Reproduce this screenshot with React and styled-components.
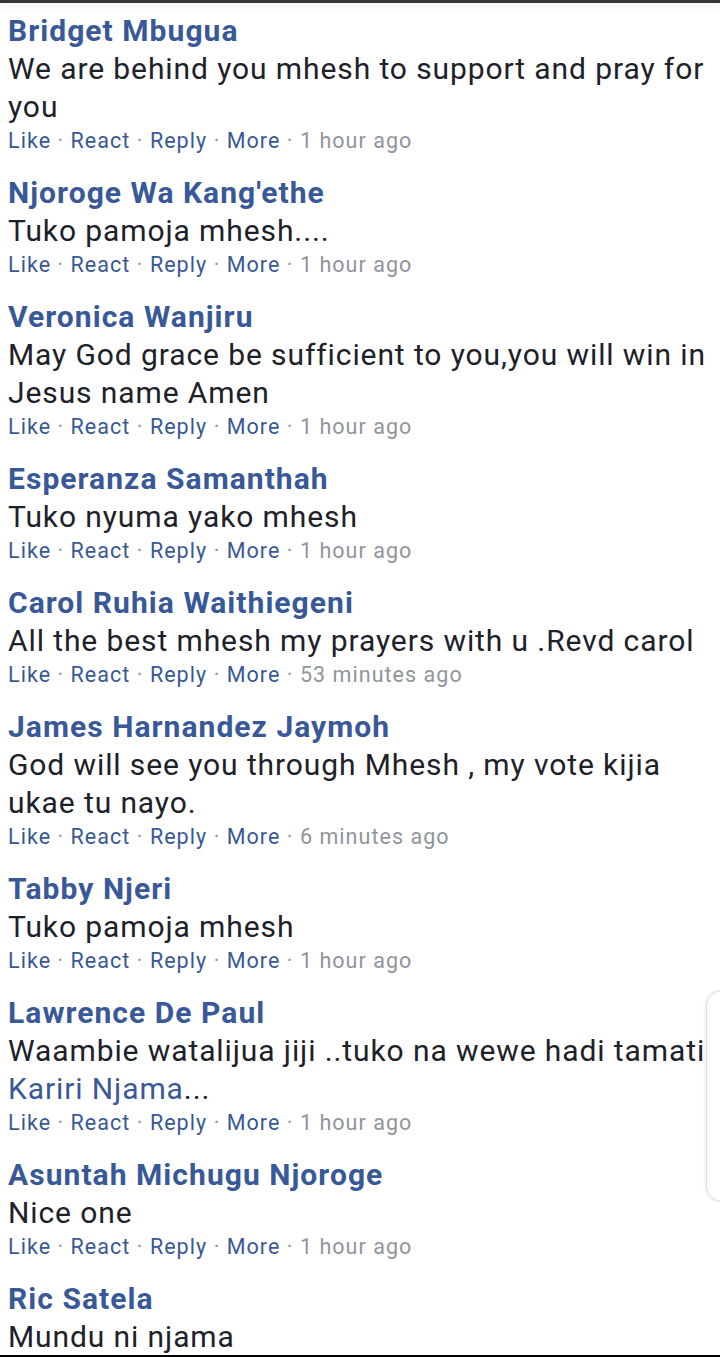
import React from 'react';
import styled, { createGlobalStyle } from 'styled-components';

const GlobalStyle = createGlobalStyle`
  html, body {
    margin: 0;
    padding: 0;
    background: #fff;
  }
  body {
    font-family: Roboto, "Noto Sans", "Liberation Sans", sans-serif;
    -webkit-font-smoothing: antialiased;
  }
`;

const Screen = styled.div`
  position: relative;
  display: flex;
  flex-direction: column;
  width: 720px;
  height: 1357px;
  overflow: hidden;
  background: #fff;
`;

const TopBar = styled.div`
  flex: 0 0 3px;
  background: #333538;
  box-shadow: 0 2px 9px rgba(0, 0, 0, 0.13);
  z-index: 1;
`;

const List = styled.div`
  flex: 1 1 auto;
  overflow: hidden;
  padding: 9px 3px 0 8px;
`;

const Comment = styled.div`
  margin-bottom: 18px;
`;

const Name = styled.div`
  font-size: 30px;
  line-height: 38px;
  font-weight: 700;
  letter-spacing: 1.05px;
  color: #385898;
`;

const Body = styled.div`
  font-size: 30px;
  line-height: 38px;
  letter-spacing: 0.9px;
  color: #1d2129;
`;

const Mention = styled.span`
  color: #385898;
`;

const Actions = styled.div`
  font-size: 21.5px;
  line-height: 30px;
  letter-spacing: 1.05px;
  color: #90949c;
  white-space: nowrap;
`;

const Action = styled.span`
  color: #385898;
`;

const BottomBar = styled.div`
  flex: 0 0 2px;
  background: #000;
`;

const SideCard = styled.div`
  position: absolute;
  left: 706px;
  top: 990px;
  width: 40px;
  height: 210px;
  border-radius: 16px;
  background: #fff;
  border: 1px solid #dcdde0;
  box-shadow: -1px 0 3px rgba(0, 0, 0, 0.08);
`;

const comments = [
  { name: 'Bridget Mbugua', text: 'We are behind you mhesh to support and pray for you', time: '1 hour ago' },
  { name: "Njoroge Wa Kang'ethe", text: 'Tuko pamoja mhesh....', time: '1 hour ago' },
  { name: 'Veronica Wanjiru', text: 'May God grace be sufficient to you,you will win in Jesus name Amen', time: '1 hour ago' },
  { name: 'Esperanza Samanthah', text: 'Tuko nyuma yako mhesh', time: '1 hour ago' },
  { name: 'Carol Ruhia Waithiegeni', text: 'All the best mhesh my prayers with u .Revd carol', time: '53 minutes ago' },
  { name: 'James Harnandez Jaymoh', text: 'God will see you through Mhesh , my vote kijia ukae tu nayo.', time: '6 minutes ago' },
  { name: 'Tabby Njeri', text: 'Tuko pamoja mhesh', time: '1 hour ago' },
  { name: 'Lawrence De Paul', text: 'Waambie watalijua jiji ..tuko na wewe hadi tamati', mention: 'Kariri Njama', time: '1 hour ago' },
  { name: 'Asuntah Michugu Njoroge', text: 'Nice one', time: '1 hour ago' },
  { name: 'Ric Satela', text: 'Mundu ni njama', time: '1 hour ago' }
];

function CommentItem({ comment }) {
  return (
    <Comment>
      <Name>{comment.name}</Name>
      <Body>
        {comment.text}
        {comment.mention && (
          <>
            {' '}
            <Mention>{comment.mention}</Mention>...
          </>
        )}
      </Body>
      <Actions>
        <Action>Like</Action> · <Action>React</Action> · <Action>Reply</Action> ·{' '}
        <Action>More</Action> · {comment.time}
      </Actions>
    </Comment>
  );
}

export default function App() {
  return (
    <>
      <GlobalStyle />
      <Screen>
        <TopBar />
        <List>
          {comments.map((c) => (
            <CommentItem key={c.name} comment={c} />
          ))}
        </List>
        <BottomBar />
        <SideCard />
      </Screen>
    </>
  );
}
